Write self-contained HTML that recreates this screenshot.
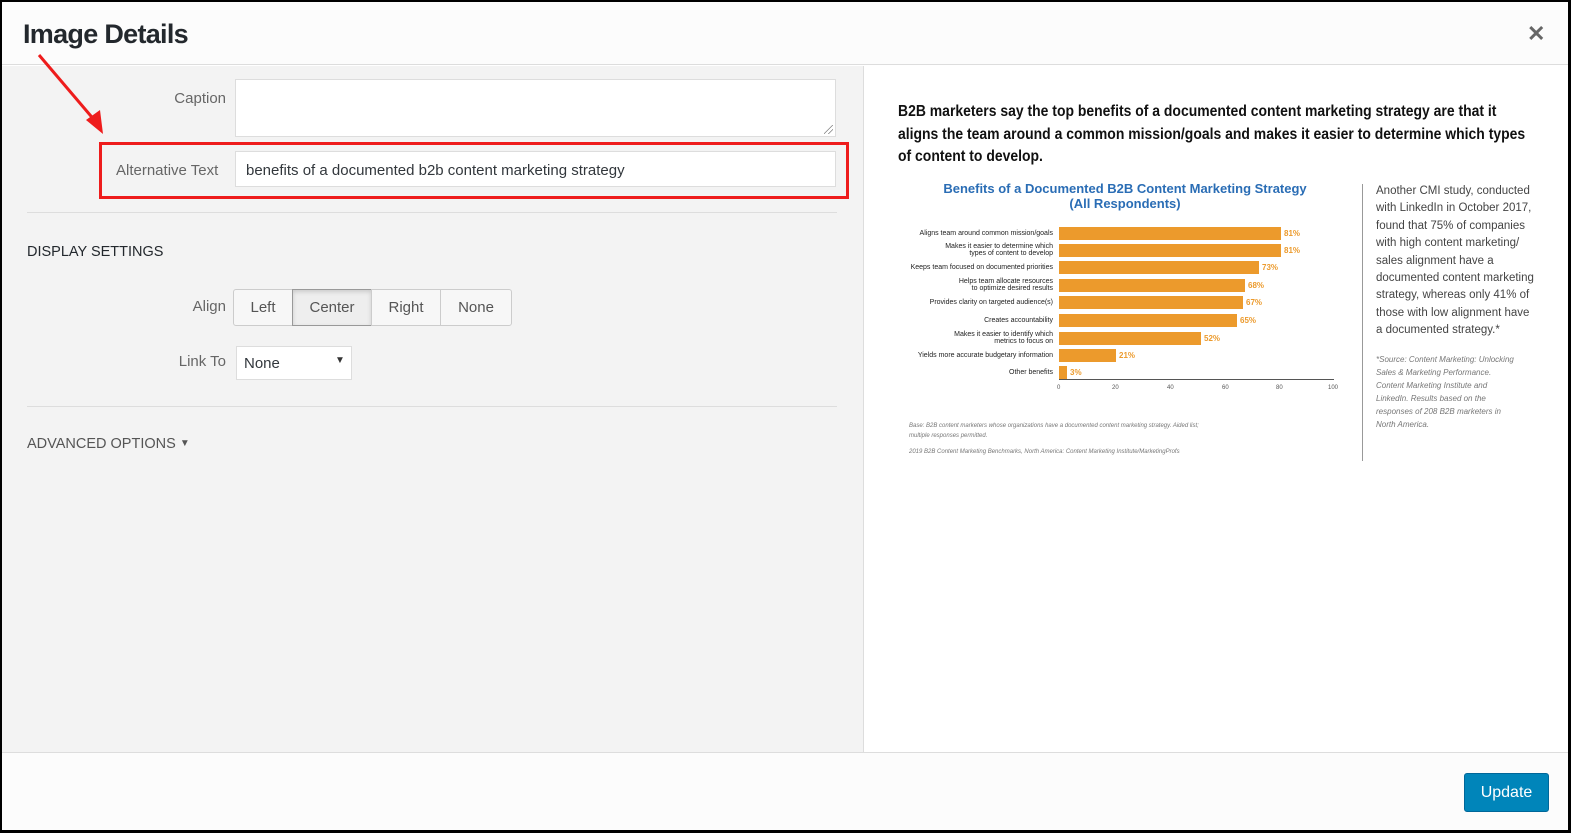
<!DOCTYPE html>
<html><head><meta charset="utf-8"><style>
*{box-sizing:border-box;margin:0;padding:0}
body{width:1571px;height:833px;background:#000;position:relative;overflow:hidden;font-family:"Liberation Sans",sans-serif;color:#23282d}
.a{position:absolute}
.n{white-space:nowrap;transform-origin:left top}
.lbl{font-size:15px;color:#666;text-align:right}
.bar{position:absolute;left:1059px;height:13px;background:#ec9a2c}
.bl{position:absolute;right:518px;font-size:7px;color:#222;text-align:right;line-height:7px;white-space:nowrap}
.bv{position:absolute;font-size:8px;font-weight:bold;color:#ec9a2c;white-space:nowrap}
.tk{position:absolute;top:385px;font-size:6px;color:#555}
.btn{position:absolute;top:289px;height:37px;border:1px solid #ccc;background:#f7f7f7;font-size:15px;color:#555;text-align:center;line-height:35px}
</style></head><body>
<div class="a" style="left:2px;top:2px;width:1566px;height:828px;background:#fff"></div>
<div class="a" style="left:2px;top:2px;width:1566px;height:63px;background:#fcfcfc;border-bottom:1px solid #ddd"></div>
<div class="a n" style="left:23px;top:19px;font-size:27px;font-weight:bold;color:#23282d;letter-spacing:-0.7px">Image Details</div>
<div class="a" style="left:1527px;top:24px;font-size:22px;font-weight:bold;color:#666;line-height:20px">✕</div>
<div class="a" style="left:2px;top:66px;width:862px;height:686px;background:#f3f3f3;border-right:1px solid #ddd"></div>
<div class="a lbl" style="left:100px;top:90px;width:126px">Caption</div>
<div class="a" style="left:235px;top:79px;width:601px;height:58px;background:#fff;border:1px solid #ddd"></div>
<div class="a" style="left:824px;top:125px;width:9px;height:9px;background:linear-gradient(135deg,transparent 45%,#888 46%,#888 52%,transparent 53%,transparent 70%,#888 71%,#888 77%,transparent 78%)"></div>
<div class="a" style="left:99px;top:142px;width:750px;height:57px;border:3px solid #ee1c1c"></div>
<div class="a lbl n" style="left:116px;top:162px">Alternative Text</div>
<div class="a" style="left:235px;top:151px;width:601px;height:36px;background:#fff;border:1px solid #ddd"></div>
<div class="a n" style="left:246px;top:162px;font-size:15px;color:#32373c">benefits of a documented b2b content marketing strategy</div>
<div class="a" style="left:27px;top:212px;width:810px;height:1px;background:#ddd"></div>
<div class="a n" style="left:27px;top:244px;font-size:14.5px;color:#23282d">DISPLAY SETTINGS</div>
<div class="a lbl" style="left:140px;top:298px;width:86px">Align</div>
<div class="btn" style="left:233px;width:60px;border-radius:3px 0 0 3px">Left</div>
<div class="btn" style="left:292px;width:80px;background:#eee;border-color:#999;box-shadow:inset 0 2px 4px rgba(0,0,0,.15)">Center</div>
<div class="btn" style="left:371px;width:70px">Right</div>
<div class="btn" style="left:440px;width:72px;border-radius:0 3px 3px 0">None</div>
<div class="a lbl" style="left:140px;top:353px;width:86px">Link To</div>
<div class="a" style="left:236px;top:346px;width:116px;height:34px;background:#fff;border:1px solid #ddd"></div>
<div class="a" style="left:244px;top:355px;font-size:15px;color:#32373c">None</div>
<div class="a" style="left:335px;top:355px;font-size:10px;color:#333">▼</div>
<div class="a" style="left:27px;top:406px;width:810px;height:1px;background:#ddd"></div>
<div class="a n" style="left:27px;top:436px;font-size:14.5px;color:#555">ADVANCED OPTIONS <span style="font-size:10px;position:relative;top:-2px">▼</span></div>
<svg class="a" style="left:0;top:0" width="120" height="140"><line x1="39" y1="55" x2="96" y2="122" stroke="#ee1c1c" stroke-width="3"/><polygon points="103,134 86,120 100,110" fill="#ee1c1c"/></svg>
<div class="a n" style="left:898px;top:101px;font-size:15.5px;font-weight:bold;color:#111;line-height:22.5px;transform:scaleX(0.9)">B2B marketers say the top benefits of a documented content marketing strategy are that it<br>aligns the team around a common mission/goals and makes it easier to determine which types<br>of content to develop.</div>
<div class="a" style="left:900px;top:181px;width:450px;text-align:center;font-size:13px;font-weight:bold;color:#2a6db5;line-height:15px">Benefits of a Documented B2B Content Marketing Strategy<br>(All Respondents)</div>
<div class="bar" style="top:227px;width:222px"></div><div class="bv" style="left:1284px;top:229px">81%</div>
<div class="bar" style="top:244px;width:222px"></div><div class="bv" style="left:1284px;top:246px">81%</div>
<div class="bar" style="top:261px;width:200px"></div><div class="bv" style="left:1262px;top:263px">73%</div>
<div class="bar" style="top:279px;width:186px"></div><div class="bv" style="left:1248px;top:281px">68%</div>
<div class="bar" style="top:296px;width:184px"></div><div class="bv" style="left:1246px;top:298px">67%</div>
<div class="bar" style="top:314px;width:178px"></div><div class="bv" style="left:1240px;top:316px">65%</div>
<div class="bar" style="top:332px;width:142px"></div><div class="bv" style="left:1204px;top:334px">52%</div>
<div class="bar" style="top:349px;width:57px"></div><div class="bv" style="left:1119px;top:351px">21%</div>
<div class="bar" style="top:366px;width:8px"></div><div class="bv" style="left:1070px;top:368px">3%</div>
<div class="bl" style="top:230px">Aligns team around common mission/goals</div>
<div class="bl" style="top:243px">Makes it easier to determine which<br>types of content to develop</div>
<div class="bl" style="top:264px">Keeps team focused on documented priorities</div>
<div class="bl" style="top:278px">Helps team allocate resources<br>to optimize desired results</div>
<div class="bl" style="top:299px">Provides clarity on targeted audience(s)</div>
<div class="bl" style="top:317px">Creates accountability</div>
<div class="bl" style="top:331px">Makes it easier to identify which<br>metrics to focus on</div>
<div class="bl" style="top:352px">Yields more accurate budgetary information</div>
<div class="bl" style="top:369px">Other benefits</div>
<div class="a" style="left:1059px;top:379px;width:275px;height:1px;background:#555"></div>
<div class="tk" style="left:1057px">0</div><div class="tk" style="left:1112px">20</div><div class="tk" style="left:1167px">40</div><div class="tk" style="left:1222px">60</div><div class="tk" style="left:1276px">80</div><div class="tk" style="left:1328px">100</div>
<div class="a n" style="left:909px;top:421px;font-size:6px;font-style:italic;color:#777;line-height:10px">Base: B2B content marketers whose organizations have a documented content marketing strategy. Aided list;<br>multiple responses permitted.</div>
<div class="a n" style="left:909px;top:449px;font-size:6px;font-style:italic;color:#777">2019 B2B Content Marketing Benchmarks, North America: Content Marketing Institute/MarketingProfs</div>
<div class="a" style="left:1362px;top:184px;width:1px;height:277px;background:#999"></div>
<div class="a" style="left:1376px;top:183px;font-size:11.5px;color:#444;line-height:17.4px;width:160px">Another CMI study, conducted with LinkedIn in October 2017, found that 75% of companies with high content marketing/ sales alignment have a documented content marketing strategy, whereas only 41% of those with low alignment have a documented strategy.*</div>
<div class="a" style="left:1376px;top:353px;font-size:8px;font-style:italic;color:#777;line-height:13px;width:145px">*Source: Content Marketing: Unlocking Sales &amp; Marketing Performance. Content Marketing Institute and LinkedIn. Results based on the responses of 208 B2B marketers in North America.</div>
<div class="a" style="left:2px;top:752px;width:1566px;height:78px;background:#fcfcfc;border-top:1px solid #ddd"></div>
<div class="a" style="left:1464px;top:773px;width:85px;height:39px;background:#0085ba;border:1px solid #006799;border-radius:3px;color:#fff;font-size:16px;text-align:center;line-height:37px">Update</div>
</body></html>
